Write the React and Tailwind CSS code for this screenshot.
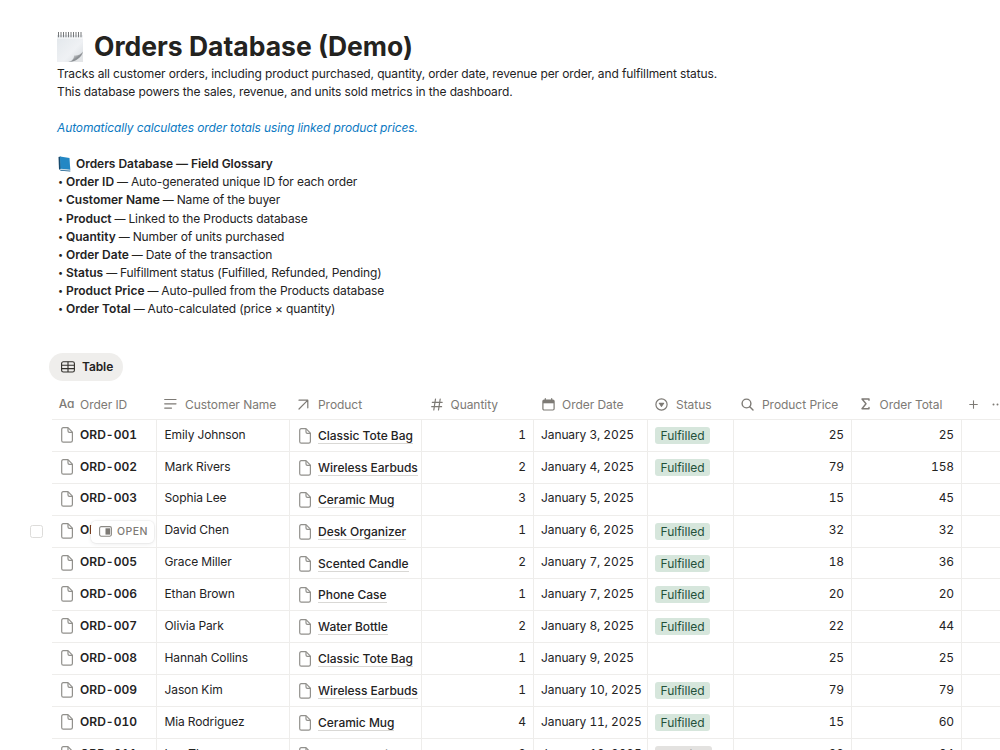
import { LuPlus } from "react-icons/lu";

const glossary = [
  { id: 0, name: "Order ID", text: "Auto-generated unique ID for each order" },
  { id: 1, name: "Customer Name", text: "Name of the buyer" },
  { id: 2, name: "Product", text: "Linked to the Products database" },
  { id: 3, name: "Quantity", text: "Number of units purchased" },
  { id: 4, name: "Order Date", text: "Date of the transaction" },
  { id: 5, name: "Status", text: "Fulfillment status (Fulfilled, Refunded, Pending)" },
  { id: 6, name: "Product Price", text: "Auto-pulled from the Products database" },
  { id: 7, name: "Order Total", text: "Auto-calculated (price × quantity)" },
];

const orders = [
  { id: "ORD-001", customer: "Emily Johnson", product: "Classic Tote Bag", qty: 1, date: "January 3, 2025", status: "Fulfilled", price: 25 },
  { id: "ORD-002", customer: "Mark Rivers", product: "Wireless Earbuds", qty: 2, date: "January 4, 2025", status: "Fulfilled", price: 79 },
  { id: "ORD-003", customer: "Sophia Lee", product: "Ceramic Mug", qty: 3, date: "January 5, 2025", status: "", price: 15 },
  { id: "ORD-004", customer: "David Chen", product: "Desk Organizer", qty: 1, date: "January 6, 2025", status: "Fulfilled", price: 32, hovered: true },
  { id: "ORD-005", customer: "Grace Miller", product: "Scented Candle", qty: 2, date: "January 7, 2025", status: "Fulfilled", price: 18 },
  { id: "ORD-006", customer: "Ethan Brown", product: "Phone Case", qty: 1, date: "January 7, 2025", status: "Fulfilled", price: 20 },
  { id: "ORD-007", customer: "Olivia Park", product: "Water Bottle", qty: 2, date: "January 8, 2025", status: "Fulfilled", price: 22 },
  { id: "ORD-008", customer: "Hannah Collins", product: "Classic Tote Bag", qty: 1, date: "January 9, 2025", status: "", price: 25 },
  { id: "ORD-009", customer: "Jason Kim", product: "Wireless Earbuds", qty: 1, date: "January 10, 2025", status: "Fulfilled", price: 79 },
  { id: "ORD-010", customer: "Mia Rodriguez", product: "Ceramic Mug", qty: 4, date: "January 11, 2025", status: "Fulfilled", price: 15 },
  { id: "ORD-011", customer: "Leo Thomas", product: "Desk Organizer", qty: 2, date: "January 12, 2025", status: "Pending", price: 32 },
];

const columns = "grid grid-cols-[105px_133px_132px_112px_114px_86px_118px_110px_1fr]";

function NotepadIcon() {
  return (
    <svg width="28" height="32" viewBox="0 0 28 32" className="-ml-px shrink-0">
      <defs>
        <linearGradient id="paper" x1="0" y1="0" x2="1" y2="1">
          <stop offset="0" stopColor="#e2e7eb" />
          <stop offset="0.6" stopColor="#eff1f4" />
          <stop offset="1" stopColor="#d5dade" />
        </linearGradient>
        <linearGradient id="curl" x1="0" y1="0" x2="1" y2="1">
          <stop offset="0.2" stopColor="#ffffff" />
          <stop offset="0.6" stopColor="#8b8f93" />
        </linearGradient>
      </defs>
      <path d="M1 4H27V21L17 31H1Z" fill="url(#paper)" />
      <path d="M17 31H27V21Z" fill="#e3e5e7" />
      <path d="M12 31C17 30 18 27 18 24.500C22 25 25 23 27 20.500C26 26 20 31 12 31Z" fill="url(#curl)" />
      <path d="M2.500 1V6.500M5 1V6.500M7.500 1V6.500M10 1V6.500M12.500 1V6.500M15 1V6.500M17.500 1V6.500M20 1V6.500M22.500 1V6.500M25 1V6.500" stroke="#77797b" strokeWidth="1" />
      <path d="M1 7H27" stroke="#ffffff" strokeWidth="0.800" />
    </svg>
  );
}

function BookIcon() {
  return (
    <svg width="14" height="16" viewBox="0 0 14 16" className="shrink-0">
      <path d="M1.500 1L3.500 0.500L4 13.500L2 13.800Z" fill="#174a6e" />
      <path d="M3 0.500L12.500 2L13.300 14L3.500 13Z" fill="#2387c4" />
      <path d="M2 13.300L4 12.800L13.300 13.800V15L3.500 14.500Z" fill="#c5d8e4" />
      <path d="M2 13.500L4 14L13.300 14.700V15.400L4 14.800Z" fill="#175e8e" />
    </svg>
  );
}

function PageIcon() {
  return (
    <svg width="12" height="16" viewBox="0 0 12 16" fill="none" stroke="#91908c" strokeWidth="1.200" strokeLinejoin="round" className="shrink-0">
      <path d="M2.300 0.700H7L11.400 5.200V13.500Q11.400 15.200 9.700 15.200H2.300Q0.700 15.200 0.700 13.500V2.400Q0.700 0.700 2.300 0.700Z" />
      <path d="M7 0.900V3.900Q7 5.300 8.400 5.300H11.200" />
    </svg>
  );
}

function TableIcon() {
  return (
    <svg width="14" height="12" viewBox="0 0 14 12" fill="none" stroke="#32302c" strokeWidth="1.100">
      <rect x="0.600" y="0.800" width="12.800" height="10.200" rx="1.800" />
      <path d="M0.600 4.200H13.400M0.600 7.600H13.400M7 0.800V11" />
    </svg>
  );
}

function TextIcon() {
  return (
    <svg width="13" height="12" viewBox="0 0 13 12" stroke="#7d7a75" strokeWidth="1.200" strokeLinecap="round">
      <path d="M0.700 1.500H12M0.700 5.800H12M0.700 10.100H7.500" />
    </svg>
  );
}

function RelationIcon() {
  return (
    <svg width="11" height="11" viewBox="0 0 11 11" fill="none" stroke="#7d7a75" strokeWidth="1.200" strokeLinecap="round" strokeLinejoin="round">
      <path d="M1 1.200H9.800V8.800M9.800 1.200L1 10" />
    </svg>
  );
}

function NumberIcon() {
  return (
    <svg width="12" height="13" viewBox="0 0 12 13" stroke="#7d7a75" strokeWidth="1.200" strokeLinecap="round">
      <path d="M4.500 1L2.800 12M9.200 1L7.500 12M1.300 4.300H11.200M0.700 8.700H10.600" />
    </svg>
  );
}

function CalendarIcon() {
  return (
    <svg width="13" height="13" viewBox="0 0 13 13" fill="none" stroke="#7d7a75" strokeWidth="1.200">
      <path d="M3.300 0.600V3M9.700 0.600V3" strokeLinecap="round" />
      <rect x="0.900" y="2" width="11.200" height="10" rx="1.200" />
      <path d="M1 2H12V5.300H1Z" fill="#7d7a75" stroke="none" />
    </svg>
  );
}

function StatusIcon() {
  return (
    <svg width="13" height="13" viewBox="0 0 13 13" fill="none">
      <circle cx="6.500" cy="6.500" r="5.600" stroke="#7d7a75" strokeWidth="1.200" />
      <path d="M4.200 4.700H8.800Q9.400 4.800 9.100 5.400L6.900 8.700Q6.500 9.100 6.100 8.700L3.900 5.400Q3.600 4.800 4.200 4.700Z" fill="#7d7a75" />
    </svg>
  );
}

function LookupIcon() {
  return (
    <svg width="13" height="13" viewBox="0 0 13 13" fill="none" stroke="#7d7a75" strokeWidth="1.400" strokeLinecap="round">
      <circle cx="5.500" cy="5.500" r="4.400" />
      <path d="M8.800 8.800L12 12" />
    </svg>
  );
}

function SigmaIcon() {
  return (
    <svg width="9" height="12" viewBox="0 0 9 12" fill="none" stroke="#7d7a75" strokeWidth="1.400" strokeLinecap="round" strokeLinejoin="round">
      <path d="M8 2.300V1H1L5 5.800L1 10.800H8V9.500" />
    </svg>
  );
}

function PeekIcon() {
  return (
    <svg width="13" height="11" viewBox="0 0 13 11" fill="none" className="shrink-0">
      <rect x="0.600" y="0.600" width="11.800" height="9.600" rx="1.600" stroke="#8b8984" strokeWidth="1.100" />
      <rect x="6.500" y="2.300" width="4.700" height="6.300" fill="#7d7a75" />
    </svg>
  );
}

function HeaderCell({ icon, label, className }) {
  return (
    <div className={`flex items-center whitespace-nowrap ${className}`}>
      <span className="flex w-[13px] shrink-0 justify-center">{icon}</span>
      <span className="pt-px">{label}</span>
    </div>
  );
}

function OrderRow({ order }) {
  const cell = "border-r border-[#eeedeb]";
  return (
    <div className="flex h-[31.9px]">
      <div className="flex w-[52px] shrink-0 items-center pl-[30px]">
        {order.hovered && <span className="h-[13px] w-[13px] rounded-[2.500px] border border-[#dddcda]"></span>}
      </div>
      <div className={`${columns} w-[948px] border-b border-[#eeedeb] leading-[18px] tabular-nums tracking-[-0.100px]`}>
        <div className={`${cell} relative flex items-start pl-[9px] pt-[7px] font-semibold tracking-[0.050px]`}>
          <PageIcon />
          <span className="-mt-[1.300px] pl-[7px]">{order.id}</span>
          {order.hovered && (
            <div className="absolute left-[39px] top-[5px] flex h-[22px] w-[63px] items-center rounded-[5px] bg-white pl-[8px] text-[10.500px] font-medium tracking-[0.500px] text-[#7d7a75] shadow-[0_1px_4px_rgba(0,0,0,0.08),0_0_0_1px_rgba(0,0,0,0.03)]">
              <PeekIcon />
              <span className="pl-[5px]">OPEN</span>
            </div>
          )}
        </div>
        <div className={`${cell} pl-[7.500px] pt-[5.700px]`}>{order.customer}</div>
        <div className={`${cell} flex items-start pl-[9px] pt-[8px] font-medium tracking-[-0.020px]`}>
          <PageIcon />
          <span className="-mt-px ml-[7px] h-[17px] whitespace-nowrap border-b border-[#d9d8d5]">{order.product}</span>
        </div>
        <div className={`${cell} pr-[7px] pt-[5.700px] text-right`}>{order.qty}</div>
        <div className={`${cell} whitespace-nowrap pl-[7px] pt-[5.700px]`}>{order.date}</div>
        <div className={`${cell} pl-[7px] pt-[7px] tracking-normal`}>
          {order.status && (
            <span className={`block h-[17px] w-fit rounded-[3px] px-[5.500px] leading-[17px] ${order.status === "Fulfilled" ? "bg-[#d6e6dc] text-[#24513a]" : "bg-[#e3e2e0] text-[#55534e]"}`}>
              {order.status}
            </span>
          )}
        </div>
        <div className={`${cell} pr-[7px] pt-[5.700px] text-right`}>{order.price}</div>
        <div className={`${cell} pr-[7px] pt-[5.700px] text-right`}>{order.price * order.qty}</div>
        <div></div>
      </div>
    </div>
  );
}

export default function App() {
  return (
    <div className="h-[750px] w-[1000px] overflow-hidden bg-white font-['Inter',sans-serif] text-[12px] text-[#24231f]">
      <div className="h-[319px] px-[57px] pt-[29px]">
        <div className="flex h-[35px] items-center">
          <NotepadIcon />
          <h1 className="whitespace-nowrap pl-[10px] text-[26.500px] font-bold">Orders Database (Demo)</h1>
        </div>
        <div className="pt-[0.600px] leading-[18.130px] tracking-[-0.120px]">
          <p>Tracks all customer orders, including product purchased, quantity, order date, revenue per order, and fulfillment status.</p>
          <p>This database powers the sales, revenue, and units sold metrics in the dashboard.</p>
          <p className="mt-[18.130px] italic text-[#0b79c2]">Automatically calculates order totals using linked product prices.</p>
          <div className="mt-[18.130px] flex items-center gap-[5px] font-semibold tracking-[-0.040px]">
            <BookIcon />
            <span>Orders Database — Field Glossary</span>
          </div>
          {glossary.map((item) => (
            <p key={item.id} className="flex whitespace-pre">
              <span className="w-[9px] shrink-0 pl-px text-[9px]">•</span>
              <span className="font-semibold tracking-normal">{item.name}</span>
              <span className="text-[11px]"> — </span>
              <span>{item.text}</span>
            </p>
          ))}
        </div>
      </div>

      <div className="mt-[34px] pl-[49px]">
        <button type="button" className="flex h-[28px] w-[74px] items-center gap-[7px] rounded-full bg-[#efeeec] pl-[12px] font-semibold tracking-[-0.100px]">
          <TableIcon />
          <span>Table</span>
        </button>
      </div>

      <div className="mt-[8px] pl-[52px]">
        <div className={`${columns} h-[31px] border-b border-[#eeedeb] tracking-[-0.050px] text-[#7d7a75]`}>
          <HeaderCell icon={<span className="text-[12px] font-medium [font-feature-settings:'cv11']">Aa</span>} label="Order ID" className="gap-[7px] pl-[8px]" />
          <HeaderCell icon={<TextIcon />} label="Customer Name" className="gap-[8px] pl-[7px]" />
          <HeaderCell icon={<RelationIcon />} label="Product" className="gap-[8px] pl-[7px]" />
          <HeaderCell icon={<NumberIcon />} label="Quantity" className="gap-[7px] pl-[8.500px]" />
          <HeaderCell icon={<CalendarIcon />} label="Order Date" className="gap-[7px] pl-[8px]" />
          <HeaderCell icon={<StatusIcon />} label="Status" className="gap-[8px] pl-[7px]" />
          <HeaderCell icon={<LookupIcon />} label="Product Price" className="gap-[8px] pl-[7px]" />
          <HeaderCell icon={<SigmaIcon />} label="Order Total" className="gap-[8px] pl-[6.500px]" />
          <div className="flex items-center gap-[12px] overflow-hidden pl-[5px]">
            <LuPlus size={13} strokeWidth={2} className="shrink-0" />
            <svg width="12" height="3" viewBox="0 0 12 3" fill="#7d7a75" className="shrink-0">
              <circle cx="1.500" cy="1.500" r="1" />
              <circle cx="5.500" cy="1.500" r="1" />
              <circle cx="9.500" cy="1.500" r="1" />
            </svg>
          </div>
        </div>
      </div>
      {orders.map((order) => (
        <OrderRow key={order.id} order={order} />
      ))}
    </div>
  );
}
